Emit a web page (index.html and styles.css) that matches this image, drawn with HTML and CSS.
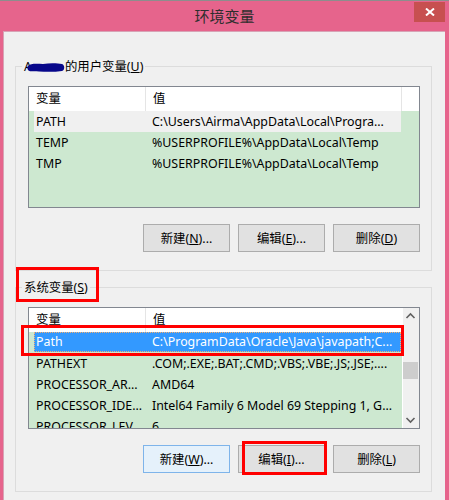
FILE: index.html
```html
<!DOCTYPE html>
<html lang="zh-CN">
<head>
<meta charset="utf-8">
<title>环境变量</title>
<link rel="stylesheet" href="styles.css">
</head>
<body>
<div class="window">
  <div class="titlebar">
    <span></span>
    <span class="title">环境变量</span>
    <button class="close" aria-label="关闭">
      <svg width="10" height="8" viewBox="0 0 10 8"><path d="M1 0.5 L9 7.5 M9 0.5 L1 7.5" stroke="#fff" stroke-width="2" fill="none"/></svg>
    </button>
  </div>
  <div class="client">
    <div class="group">
      <div class="group-label"><span class="owner">A<svg class="scribble" width="38" height="11" viewBox="0 0 38 11"><path d="M1 4 C4 1 10 2 16 2 C22 1 30 1 35 2 C38 3 38 8 35 9 C28 10 20 10 12 9.5 C7 9 2 10 1 8 C0 6 0 5 1 4 Z" fill="#07078a"/></svg></span>的用户变量(<u>U</u>)</div>
      <div class="list">
        <div class="list-main">
          <div class="hdr">
            <div class="hc h1">变量</div>
            <div class="hc h2">值</div>
            <div class="hc h3"></div>
          </div>
          <div class="row inactive"><div class="c1">PATH</div><div class="c2">C:\Users\Airma\AppData\Local\Progra...</div></div>
          <div class="row"><div class="c1">TEMP</div><div class="c2">%USERPROFILE%\AppData\Local\Temp</div></div>
          <div class="row"><div class="c1">TMP</div><div class="c2">%USERPROFILE%\AppData\Local\Temp</div></div>
        </div>
      </div>
      <div class="buttons">
        <button class="btn">新建(<u>N</u>)...</button>
        <button class="btn">编辑(<u>E</u>)...</button>
        <button class="btn">删除(<u>D</u>)</button>
      </div>
    </div>

    <div class="group">
      <div class="group-label">系统变量(<u>S</u>)</div>
      <div class="list">
        <div class="list-main">
          <div class="hdr">
            <div class="hc h1">变量</div>
            <div class="hc h2 last">值</div>
          </div>
          <div class="row selected"><div class="c1">Path</div><div class="c2">C:\ProgramData\Oracle\Java\javapath;C...</div></div>
          <div class="row"><div class="c1">PATHEXT</div><div class="c2">.COM;.EXE;.BAT;.CMD;.VBS;.VBE;.JS;.JSE;....</div></div>
          <div class="row"><div class="c1">PROCESSOR_AR...</div><div class="c2">AMD64</div></div>
          <div class="row"><div class="c1">PROCESSOR_IDE...</div><div class="c2">Intel64 Family 6 Model 69 Stepping 1, G...</div></div>
          <div class="row"><div class="c1">PROCESSOR_LEV...</div><div class="c2">6</div></div>
        </div>
        <div class="scrollbar">
          <svg class="arrow" width="17" height="17" viewBox="0 0 17 17"><path d="M4.5 10 L8.5 6 L12.5 10" stroke="#606060" stroke-width="1.6" fill="none"/></svg>
          <div class="track"><div class="thumb"></div></div>
          <svg class="arrow" width="17" height="17" viewBox="0 0 17 17"><path d="M4.5 7 L8.5 11 L12.5 7" stroke="#606060" stroke-width="1.6" fill="none"/></svg>
        </div>
      </div>
      <div class="buttons">
        <button class="btn default">新建(<u>W</u>)...</button>
        <button class="btn">编辑(<u>I</u>)...</button>
        <button class="btn">删除(<u>L</u>)</button>
      </div>
    </div>
  </div>
</div>

<div class="mark mark-sys"></div>
<div class="mark mark-path"></div>
<div class="mark mark-edit"></div>
</body>
</html>
```

FILE: styles.css
```css
* {
  box-sizing: border-box;
}

html, body {
  margin: 0;
  padding: 0;
}

body {
  width: 449px;
  height: 500px;
  overflow: hidden;
  position: relative;
  background: #e6648c;
  font-family: "Noto Sans", "Noto Sans CJK SC", sans-serif;
  font-size: 12.4px;
  color: #000;
}

.window {
  width: 449px;
  height: 500px;
}

.titlebar {
  height: 31px;
  border-top: 1px solid #8d8d8d;
  display: grid;
  grid-template-columns: 1fr auto 1fr;
  align-items: center;
}

.title {
  font-family: "Noto Sans CJK SC", sans-serif;
  font-size: 15px;
  color: #2e2e2e;
  line-height: 20px;
  margin-top: -1px;
}

.close {
  justify-self: end;
  align-self: start;
  width: 31px;
  height: 20px;
  margin: 1px 4px 0 0;
  padding: 0;
  border: none;
  background: #c75050;
  display: flex;
  align-items: center;
  justify-content: center;
}

.client {
  margin: 0 4px 0 3px;
  height: 469px;
  background: #f0f0f0;
  border-top: 1px solid #d7a3b5;
  border-left: 1px solid #d7a3b5;
  padding: 34px 13px 0 11px;
}

.group {
  border: 1px solid #dcdcdc;
  padding: 0 11px 18px 12px;
  display: flex;
  flex-direction: column;
}

.group + .group {
  margin-top: 16px;
}

.group-label {
  align-self: flex-start;
  height: 17px;
  line-height: 17px;
  margin: -9px 0 0 -6px;
  padding: 0 2px;
  background: #f0f0f0;
  display: flex;
  align-items: center;
  white-space: nowrap;
}

.owner {
  display: inline-flex;
  align-items: center;
}

.scribble {
  margin-left: -5px;
  margin-top: 1px;
}

u {
  text-decoration: underline;
  text-underline-offset: 1px;
}

.list {
  margin-top: 11px;
  height: 122px;
  border: 1px solid #828790;
  background: #cde8d0;
  display: flex;
  overflow: hidden;
}

.list-main {
  flex: 1;
  min-width: 0;
  overflow: hidden;
}

.hdr {
  height: 24px;
  background: #fff;
  display: flex;
}

.hc {
  padding-left: 7px;
  line-height: 23px;
  border-right: 1px solid #e5e5e5;
  white-space: nowrap;
}

.h1 {
  width: 117px;
}

.h2 {
  width: 256px;
}

.h2.last {
  flex: 1;
  border-right: none;
}

.h3 {
  flex: 1;
  border-right: none;
}

.row {
  margin-left: 5px;
  width: 367px;
  height: 21px;
  line-height: 21px;
  display: flex;
  white-space: nowrap;
}

.row .c1 {
  width: 111px;
  padding-left: 2px;
  overflow: hidden;
}

.row .c2 {
  flex: 1;
  padding-left: 7px;
  overflow: hidden;
}

.row.inactive {
  background: #f0f0f0;
}

.row.selected {
  background: #3399ff;
  color: #fff;
  height: 20px;
  line-height: 19px;
  margin-bottom: 1px;
  outline: 1px dotted #f5b070;
  outline-offset: -1px;
}

.scrollbar {
  width: 17px;
  background: #f0f0f0;
  border-left: 1px solid #fff;
  display: flex;
  flex-direction: column;
}

.arrow {
  display: block;
  flex: none;
  margin-left: -1px;
}

.track {
  flex: 1;
  padding-top: 37px;
}

.thumb {
  width: 15px;
  height: 17px;
  background: #cdcdcd;
}

.buttons {
  margin-top: 16px;
  display: flex;
  justify-content: flex-end;
  gap: 8px;
}

.btn {
  width: 87px;
  height: 28px;
  margin: 0;
  padding: 0;
  border: 1px solid #acacac;
  background: #e1e1e1;
  font-family: "Noto Sans", "Noto Sans CJK SC", sans-serif;
  font-size: 12.4px;
  color: #000;
}

.btn.default {
  border-color: #7eb4ea;
  background: #e5f1fb;
}

.mark {
  position: absolute;
  border: 3px solid #ff0000;
}

.mark-sys {
  left: 16px;
  top: 267px;
  width: 83px;
  height: 35px;
}

.mark-path {
  left: 21px;
  top: 325px;
  width: 383px;
  height: 31px;
}

.mark-edit {
  left: 242px;
  top: 441px;
  width: 85px;
  height: 34px;
}
```
